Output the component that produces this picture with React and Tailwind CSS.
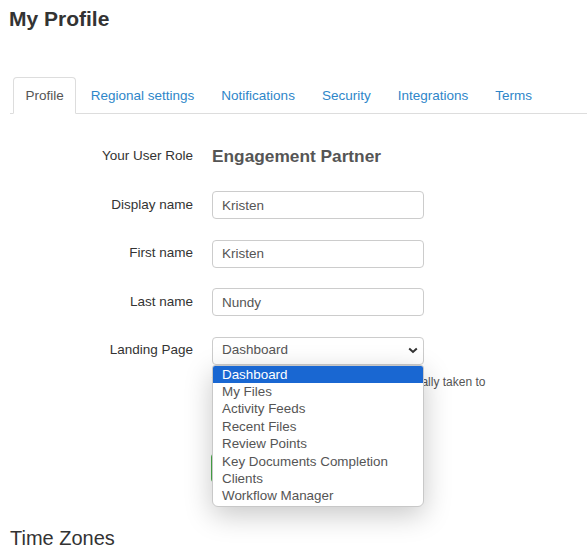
import { useState } from "react";

const tabs = ["Profile", "Regional settings", "Notifications", "Security", "Integrations", "Terms"];

const pages = [
  "Dashboard",
  "My Files",
  "Activity Feeds",
  "Recent Files",
  "Review Points",
  "Key Documents Completion",
  "Clients",
  "Workflow Manager",
];

const Field = ({ label, children }) => (
  <div className="flex items-center h-[28px]">
    <label className="w-[193px] shrink-0 text-right text-[13.5px] text-[#333]">{label}</label>
    <div className="ml-[19px] w-[212px] h-full">{children}</div>
  </div>
);

const TextInput = ({ value }) => (
  <input
    type="text"
    defaultValue={value}
    className="w-full h-full border border-[#ccc] rounded-[4px] pl-[9px] text-[13.5px] text-[#555] outline-none bg-white"
  />
);

const App = () => {
  const [active] = useState("Profile");
  const [landing] = useState("Dashboard");

  return (
    <div className="w-[587px] h-[553px] overflow-hidden bg-white text-[#333] font-['Liberation_Sans',Arial,sans-serif]">
      <h1 className="pl-[9px] pt-[7px] text-[21px] leading-[24px] font-bold">My Profile</h1>

      <ul className="mt-[46px] ml-[10px] pl-[3px] flex border-b border-[#ddd]">
        {tabs.map((t) => (
          <li key={t} className="-mb-px mr-[2px]">
            <a
              className={
                active === t
                  ? "block pt-[8px] pb-[7px] px-[11.5px] text-[13.5px] leading-[20px] text-[#555] bg-white border border-[#ddd] border-b-transparent rounded-t-[4px]"
                  : "block pt-[8px] pb-[7px] px-[11.5px] text-[13.5px] leading-[20px] text-[#2e86c9] border border-transparent"
              }
            >
              {t}
            </a>
          </li>
        ))}
      </ul>

      <div className="mt-[28.5px] flex flex-col gap-[20.5px]">
        <Field label="Your User Role">
          <div className="h-full flex items-center text-[17.3px] font-bold text-[#555]">Engagement Partner</div>
        </Field>
        <Field label="Display name">
          <TextInput value="Kristen" />
        </Field>
        <Field label="First name">
          <TextInput value="Kristen" />
        </Field>
        <Field label="Last name">
          <TextInput value="Nundy" />
        </Field>
        <Field label="Landing Page">
          <div className="relative h-full">
            <div className="h-full border border-[#ccc] rounded-[4px] pl-[9px] pr-[5px] flex items-center justify-between text-[13.5px] text-[#555] bg-white">
              <span>{landing}</span>
              <svg width="10" height="7" viewBox="0 0 10 7">
                <path d="M1.2 1.5 L5 5 L8.8 1.5" fill="none" stroke="#333" strokeWidth="2" />
              </svg>
            </div>
            <ul className="absolute z-10 left-0 top-full w-[212px] bg-white border border-[#c8c8c8] rounded-b-[6px] rounded-t-[3px] pb-[1px] shadow-[0_8px_28px_rgba(0,0,0,0.22)] overflow-hidden">
              {pages.map((p) => (
                <li
                  key={p}
                  className={
                    p === landing
                      ? "pl-[9px] text-[13.4px] leading-[17.4px] bg-[#1967d2] text-white"
                      : "pl-[9px] text-[13.4px] leading-[17.4px] text-[#555]"
                  }
                >
                  {p}
                </li>
              ))}
            </ul>
          </div>
        </Field>
      </div>

      <div className="ml-[212px] mt-[9.5px] w-[280px] text-[12px] leading-[17px] text-[#555]">
        This is the page users will be automatically taken to after they log in to the application.
      </div>

      <div className="ml-[211px] mt-[44.5px]">
        <button className="h-[30px] px-[12px] rounded-[4px] bg-[#5cb85c] border border-[#4cae4c] text-white text-[13.5px]">
          Save changes
        </button>
      </div>

      <h2 className="mt-[44px] pl-[10px] text-[20px] leading-[22px] text-[#333]">Time Zones</h2>
    </div>
  );
};

export default App;
